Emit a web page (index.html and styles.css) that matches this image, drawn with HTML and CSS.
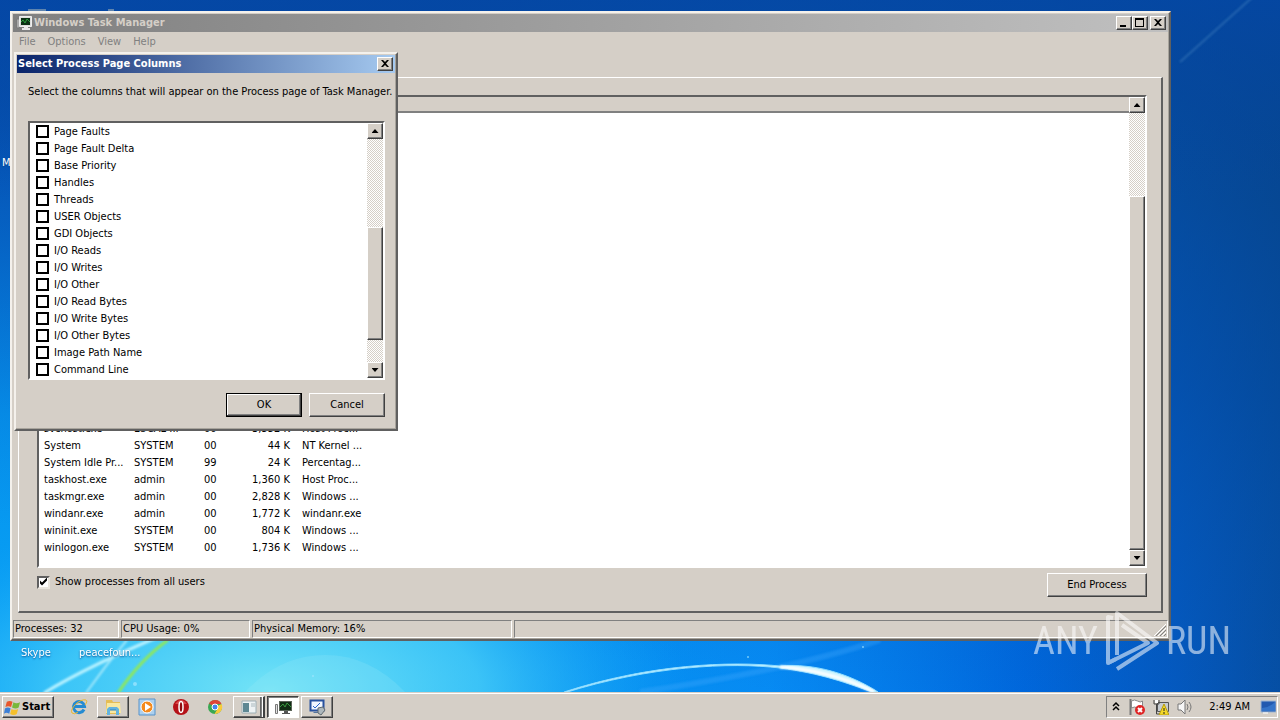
FILE: index.html
```html
<!DOCTYPE html>
<html lang="en">
  <head>
    <meta charset="UTF-8" />
    <meta name="viewport" content="width=device-width, initial-scale=1.0" />
    <title>Windows Task Manager</title>
    <link rel="stylesheet" href="styles.css">
  </head>
  <body>
    <main class="desktop">
      <svg class="wallpaper" viewBox="0 0 1280 692" preserveAspectRatio="none" aria-hidden="true">
        <defs>
          <linearGradient id="sky" x1="0" y1="0" x2="0" y2="1">
            <stop offset="0" stop-color="#0848ac" />
            <stop offset="0.25" stop-color="#0763cf" />
            <stop offset="0.6" stop-color="#0693ee" />
            <stop offset="1" stop-color="#08a4f6" />
          </linearGradient>
          <linearGradient id="shade" x1="0" y1="0" x2="1" y2="0">
            <stop offset="0.3" stop-color="#0068e0" stop-opacity="0" />
            <stop offset="0.6" stop-color="#0680f2" stop-opacity="0.7" />
            <stop offset="0.8" stop-color="#0068de" />
            <stop offset="0.92" stop-color="#0459c0" />
            <stop offset="1" stop-color="#064ea2" />
          </linearGradient>
          <linearGradient id="dusk" x1="1" y1="0" x2="0.6" y2="1">
            <stop offset="0" stop-color="#08407f" stop-opacity="0.85" />
            <stop offset="0.5" stop-color="#04489a" stop-opacity="0.5" />
            <stop offset="1" stop-color="#0458b8" stop-opacity="0" />
          </linearGradient>
          <linearGradient id="horizon" x1="0" y1="0" x2="0" y2="1">
            <stop offset="0" stop-color="#0448a8" stop-opacity="0.8" />
            <stop offset="1" stop-color="#0448a8" stop-opacity="0" />
          </linearGradient>
          <radialGradient id="glow">
            <stop offset="0" stop-color="#74e4f6" />
            <stop offset="0.5" stop-color="#48cdf8" stop-opacity="0.8" />
            <stop offset="1" stop-color="#10a0f8" stop-opacity="0" />
          </radialGradient>
          <filter id="soft"><feGaussianBlur stdDeviation="1" /></filter>
        </defs>
        <rect width="1280" height="692" fill="url(#sky)" />
        <rect width="1280" height="692" fill="url(#shade)" />
        <rect width="1280" height="692" fill="url(#dusk)" />
        <rect width="1280" height="200" fill="url(#horizon)" />
        <ellipse cx="270" cy="690" rx="420" ry="190" fill="url(#glow)" />
        <path d="M245 692Q280 655 325 655T405 692z" fill="#a0ecfa" opacity="0.2" />
        <g fill="none" filter="url(#soft)">
          <path d="M44 693Q90 665 170 632" stroke="#b8f2ff" stroke-width="3" />
          <path d="M86 693Q105 666 127 640" stroke="#a0e8fb" stroke-width="2" />
          <path d="M118 693Q140 660 168 640" stroke="#8ee85c" stroke-width="3" />
          <path d="M640 692Q790 670 880 640" stroke="#45adff" stroke-width="6" opacity="0.3" />
          <path d="M1180 62L1256 -6" stroke="#5390c8" stroke-width="2" opacity="0.4" />
        </g>
        <path d="M564 693C650 666 730 662 780 668C820 673 850 684 872 692L878 692C850 674 815 663 780 666C730 661 650 664 564 692z" fill="#c8f3ff" stroke="#8edcff" stroke-width="1" />
        <path d="M780 667Q830 670 874 692" fill="none" stroke="#fff" stroke-width="3" filter="url(#soft)" />
        <path d="M28 10h18M108 10h6" stroke="#b7bfb8" stroke-width="2" opacity="0.5" />
        <g fill="#a5e7ff" opacity="0.7">
          <circle cx="135" cy="684" r="2" />
          <circle cx="313" cy="676" r="1" />
          <circle cx="748" cy="657" r="1" />
          <circle cx="863" cy="647" r="1" />
        </g>
      </svg>

      <span class="shortcut shortcut-edge">M</span>
      <span class="shortcut shortcut-skype">Skype</span>
      <span class="shortcut shortcut-peace">peacefoun...</span>

      <section class="window task-manager">
        <header class="title-bar inactive">
          <svg class="title-icon" viewBox="0 0 16 16" aria-hidden="true">
            <path d="M1 4h2v9H1z" fill="#ddd" stroke="#777" />
            <path d="M3.500 1.500h12v10h-12z" fill="#ddd" stroke="#eee" />
            <path d="M5 3h9v7H5z" fill="#0b3014" />
            <path d="M5 7l2-2 2 3 2-4 3 3" fill="none" stroke="#2d9d3d" />
            <path d="M8 12h4v1h2v2H6v-2h2z" fill="#e8e8e8" />
          </svg>
          <h1>Windows Task Manager</h1>
          <div class="title-buttons">
            <button class="title-button" aria-label="Minimize">
              <svg viewBox="0 0 12 10"><path d="M2 7h6v2H2z" /></svg>
            </button>
            <button class="title-button" aria-label="Maximize">
              <svg viewBox="0 0 12 10"><path d="M1 0h9v9H1zM2 2v6h7V2z" fill-rule="evenodd" /></svg>
            </button>
            <button class="title-button title-close" aria-label="Close">
              <svg viewBox="0 0 12 10"><path d="M2 1h2l2 2 2-2h2L7 4.500 10 8H8L6 6 4 8H2l3-3.500z" /></svg>
            </button>
          </div>
        </header>
        <nav class="menu">
          <button>File</button>
          <button>Options</button>
          <button>View</button>
          <button>Help</button>
        </nav>

        <div class="tab-page">
          <div class="sunken process-list">
            <div class="process-view">
              <div class="process-header"></div>
              <div class="process-rows">
                <table>
                  <colgroup>
                    <col class="col-name"><col class="col-user"><col class="col-cpu"><col class="col-memory"><col>
                  </colgroup>
                  <tr><td>svchost.exe</td><td>LOCAL ...</td><td>00</td><td>3,552 K</td><td>Host Proc...</td></tr>
                  <tr><td>System</td><td>SYSTEM</td><td>00</td><td>44 K</td><td>NT Kernel ...</td></tr>
                  <tr><td>System Idle Pr...</td><td>SYSTEM</td><td>99</td><td>24 K</td><td>Percentag...</td></tr>
                  <tr><td>taskhost.exe</td><td>admin</td><td>00</td><td>1,360 K</td><td>Host Proc...</td></tr>
                  <tr><td>taskmgr.exe</td><td>admin</td><td>00</td><td>2,828 K</td><td>Windows ...</td></tr>
                  <tr><td>windanr.exe</td><td>admin</td><td>00</td><td>1,772 K</td><td>windanr.exe</td></tr>
                  <tr><td>wininit.exe</td><td>SYSTEM</td><td>00</td><td>804 K</td><td>Windows ...</td></tr>
                  <tr><td>winlogon.exe</td><td>SYSTEM</td><td>00</td><td>1,736 K</td><td>Windows ...</td></tr>
                </table>
              </div>
            </div>
            <div class="scrollbar process-scroll">
              <button class="scroll-button up" aria-label="Scroll up"></button>
              <div class="scroll-track"><div class="scroll-thumb"></div></div>
              <button class="scroll-button down" aria-label="Scroll down"></button>
            </div>
          </div>
          <div class="tab-footer">
            <label class="all-users"><input type="checkbox" checked>Show processes from all users</label>
            <button class="button end-process">End Process</button>
          </div>
        </div>

        <footer class="status-bar">
          <span class="status-processes">Processes: 32</span>
          <span class="status-cpu">CPU Usage: 0%</span>
          <span class="status-memory">Physical Memory: 16%</span>
          <span class="status-rest">
            <svg class="grip" viewBox="0 0 12 12" aria-hidden="true">
              <path d="M0 12L12 0M4 12l8-8M8 12l4-4" stroke="#fff" />
              <path d="M2 12L12 2M6 12l6-6M10 12l2-2" stroke="#808080" stroke-width="1" />
            </svg>
          </span>
        </footer>
      </section>

      <section class="window dialog" role="dialog" aria-labelledby="dialog-title">
        <header class="title-bar">
          <h2 id="dialog-title">Select Process Page Columns</h2>
          <div class="title-buttons">
            <button class="title-button" aria-label="Close">
              <svg viewBox="0 0 12 10"><path d="M2 1h2l2 2 2-2h2L7 4.500 10 8H8L6 6 4 8H2l3-3.500z" /></svg>
            </button>
          </div>
        </header>
        <form class="dialog-body">
          <p>Select the columns that will appear on the Process page of Task Manager.</p>
          <div class="sunken column-list">
            <div class="column-options">
              <label><input type="checkbox">Page Faults</label>
              <label><input type="checkbox">Page Fault Delta</label>
              <label><input type="checkbox">Base Priority</label>
              <label><input type="checkbox">Handles</label>
              <label><input type="checkbox">Threads</label>
              <label><input type="checkbox">USER Objects</label>
              <label><input type="checkbox">GDI Objects</label>
              <label><input type="checkbox">I/O Reads</label>
              <label><input type="checkbox">I/O Writes</label>
              <label><input type="checkbox">I/O Other</label>
              <label><input type="checkbox">I/O Read Bytes</label>
              <label><input type="checkbox">I/O Write Bytes</label>
              <label><input type="checkbox">I/O Other Bytes</label>
              <label><input type="checkbox">Image Path Name</label>
              <label><input type="checkbox">Command Line</label>
            </div>
            <div class="scrollbar column-scroll">
              <button type="button" class="scroll-button up" aria-label="Scroll up"></button>
              <div class="scroll-track"><div class="scroll-thumb"></div></div>
              <button type="button" class="scroll-button down" aria-label="Scroll down"></button>
            </div>
          </div>
          <div class="dialog-buttons">
            <button type="button" class="button default">OK</button>
            <button type="button" class="button">Cancel</button>
          </div>
        </form>
      </section>

      <div class="watermark">
        <span>ANY</span>
        <svg viewBox="0 0 56 64" aria-hidden="true">
          <g fill="none" stroke="currentColor" stroke-width="4" stroke-linejoin="round">
            <path d="M13 46V4L53 34 13 60" />
            <path d="M9 9L4 8V54L44 34 18 16" />
            <path d="M4 54L12 50" />
          </g>
        </svg>
        <span>RUN</span>
      </div>
    </main>

    <footer class="taskbar">
      <button class="start">
        <svg viewBox="0 0 18 18" aria-hidden="true">
          <path d="M3 3q3-2 6 0L7.500 8.500q-3-1.500-6 0z" fill="#e8562a" />
          <path d="M10 3.500q3 2 7 0L15.500 9q-3 2-7 0z" fill="#78b83a" />
          <path d="M1 10q3-2 6 0L5.500 15.500q-3-2-5.500 0z" fill="#3c7fd6" />
          <path d="M8 10.500q3 2 7 0L13.500 16q-3 2-7 0z" fill="#f5c02c" />
        </svg>
        Start
      </button>
      <div class="tasks">
        <button class="task" aria-label="Internet Explorer">
          <svg viewBox="0 0 18 18">
            <path d="M14 11.500A5.500 5.500 0 1 1 14.500 8.500H5" fill="none" stroke="#258bd2" stroke-width="3" />
            <path d="M2 15C-1 11 10 0 16 2q2 1-1 5M2 15q2 2 6-1" fill="none" stroke="#e9b82e" stroke-width="1" />
          </svg>
        </button>
        <button class="task raised" aria-label="Explorer">
          <svg viewBox="0 0 18 18">
            <path d="M2 2h6l1 2h7v12H2z" fill="#e5bd55" />
            <path d="M3 5h13l1 10H2z" fill="#f8e8a0" />
            <path d="M3 17v-6l2-2h8l2 2v6h-3v-5H6v5z" fill="#63b3df" />
            <path d="M6 12h6" stroke="#2e80b8" />
          </svg>
        </button>
        <button class="task" aria-label="Media Player">
          <svg viewBox="0 0 18 18">
            <path d="M1 1h16v16H1z" fill="#acd0ee" stroke="#5793cb" />
            <circle cx="9" cy="9" r="6" fill="#f48a1c" stroke="#fff" />
            <path d="M7 5l6 4-6 4z" fill="#fff" />
          </svg>
        </button>
        <button class="task" aria-label="Opera">
          <svg viewBox="0 0 18 18">
            <circle cx="9" cy="9" r="8" fill="#b51218" />
            <path d="M3 6q6-8 12 0z" fill="#d8474a" />
            <ellipse cx="9" cy="9" rx="2" ry="5.500" fill="#8f0c10" stroke="#fff" stroke-width="1.500" />
          </svg>
        </button>
        <button class="task" aria-label="Chrome">
          <svg viewBox="0 0 18 18">
            <circle cx="9" cy="9" r="7" fill="#39a852" />
            <path d="M9 9L3 5.500A7 7 0 0 1 15.500 6H9z" fill="#de4335" />
            <path d="M9 9L15.500 6A7 7 0 0 1 8.500 16l3.500-6z" fill="#f9cb3a" />
            <circle cx="9" cy="9" r="3" fill="#4384ee" stroke="#fff" />
          </svg>
        </button>
        <button class="task raised stacked" aria-label="Window group">
          <svg viewBox="0 0 18 18">
            <path d="M2 3h14v12H2z" fill="#eef3f4" stroke="#9daeb4" />
            <path d="M3 5h6v9H3z" fill="#5d8793" />
            <path d="M11 6h4M11 8h4" stroke="#a9b8bd" />
          </svg>
        </button>
        <button class="task pressed" aria-label="Windows Task Manager">
          <svg viewBox="0 0 18 18">
            <path d="M1.500 6.500h2v9h-2z" fill="#e2e2e2" stroke="#777" />
            <path d="M5 3h13v10H5z" fill="#596357" />
            <path d="M6 4h11v8H6z" fill="#102c13" />
            <path d="M6 9l3-3 2 3 2-4 4 4" fill="none" stroke="#36973d" />
            <path d="M10 13h4v2h2v1H8v-1h2z" fill="#555" />
          </svg>
        </button>
        <button class="task raised" aria-label="Display settings">
          <svg viewBox="0 0 18 18">
            <path d="M2.500 2.500h13v10h-13z" fill="#f2f7ff" stroke="#28529f" stroke-width="2" />
            <path d="M5 8l2 2 5-5" fill="none" stroke="#2864cc" stroke-width="1" />
            <path d="M6 14h5v1H5z" fill="#54749c" />
            <path d="M10 10l5-1 2 3-4 5-3-2z" fill="#aeb8bd" stroke="#606b72" />
          </svg>
        </button>
      </div>
      <div class="tray">
        <button class="tray-button chevron" aria-label="Show hidden icons">
          <svg viewBox="0 0 10 16"><path d="M2 7l3-3 3 3M2 11l3-3 3 3" fill="none" stroke="#000" stroke-width="1.500" /></svg>
        </button>
        <button class="tray-button" aria-label="Action Center">
          <svg viewBox="0 0 16 16">
            <path d="M1.500 0v16" stroke="#777" stroke-width="2" />
            <path d="M2.500 2q3-2 6 0t5 0v7q-2 2-5 0t-6 0z" fill="#fff" stroke="#888" />
            <circle cx="11" cy="11" r="5" fill="#df2525" />
            <path d="M9 9l4 4M13 9l-4 4" stroke="#fff" stroke-width="2" />
          </svg>
        </button>
        <button class="tray-button" aria-label="Network">
          <svg viewBox="0 0 16 16">
            <path d="M4.500 3.500h11v9h-11z" fill="#c6cbd0" stroke="#555" />
            <path d="M1 1v4h5V1M3.500 5v10H7" fill="none" stroke="#444" stroke-width="1" />
            <path d="M2 1h3v3H2z" fill="#fff" />
            <path d="M11 5l5 11H6z" fill="#f5d929" stroke="#b59a0b" />
            <path d="M11 9v3M11 13v2" stroke="#222" />
          </svg>
        </button>
        <button class="tray-button speaker" aria-label="Volume">
          <svg viewBox="0 0 16 16">
            <path d="M1 5h3l4-4v14l-4-4H1z" fill="#f6f6f6" stroke="#777" />
            <path d="M10 5q2 3 0 6M12 3q4 5 0 10" fill="none" stroke="#777" />
          </svg>
        </button>
        <time>2:49 AM</time>
        <button class="tray-button" aria-label="Show desktop">
          <svg viewBox="0 0 16 16">
            <path d="M1 2h15v11H1z" fill="#225ab0" stroke="#9fb7d4" />
            <path d="M2 9q7 0 13-6v9H2z" fill="#3474c9" />
            <path d="M3 14h5" stroke="#fff" />
          </svg>
        </button>
      </div>
    </footer>
  </body>
</html>
```
FILE: styles.css
```css
* {
  box-sizing: border-box;
}
body {
  margin: 0;
  height: 100vh;
  display: flex;
  flex-direction: column;
  overflow: hidden;
  font-family: Tahoma, "DejaVu Sans Condensed", "DejaVu Sans", sans-serif;
  font-size: 11px;
  line-height: 14px;
  color: #000;
}
button {
  font: inherit;
  color: inherit;
  padding: 0;
  border: 0;
  background: none;
}
svg {
  display: block;
}
.desktop {
  position: relative;
  flex: 1;
  min-height: 0;
}
.wallpaper {
  width: 100%;
  height: 100%;
}

/* desktop icons */
.shortcut {
  position: absolute;
  color: #fff;
  text-shadow: 0 1px 2px #05478c;
}
.shortcut-edge {
  left: 2px;
  top: 156px;
}
.shortcut-skype {
  left: 21px;
  bottom: 32px;
}
.shortcut-peace {
  left: 79px;
  bottom: 32px;
}

/* windows */
.window {
  position: absolute;
  display: flex;
  flex-direction: column;
  padding: 1px;
  background: #d5cfc7;
  border: 2px solid;
  border-color: #f4f1ec #606060 #606060 #f4f1ec;
  box-shadow: inset -1px -1px #a8a49c;
}
.task-manager {
  left: 10px;
  top: 11px;
  right: 109px;
  bottom: 51px;
}
.dialog {
  left: 14px;
  top: 52px;
  width: 384px;
}
.title-bar {
  display: flex;
  align-items: center;
  height: 18px;
  padding: 0 2px 0 1px;
  color: #fff;
  background: linear-gradient(to right, #0a246a, #a6caf0);
}
.title-bar h1,
.title-bar h2 {
  flex: 1;
  margin: 0;
  font-size: 11px;
}
.title-bar.inactive {
  color: #d5cfc7;
  background: linear-gradient(to right, #808080, #c0c0c0);
}
.title-icon {
  width: 16px;
  height: 16px;
  margin: 0 2px;
}
.title-buttons {
  display: flex;
}
.title-button {
  width: 16px;
  height: 14px;
  padding: 1px;
}
.title-button svg {
  width: 12px;
  height: 10px;
}
.title-close {
  margin-left: 2px;
}
.title-button,
.button,
.scroll-button,
.scroll-thumb,
.start,
.task.raised {
  background: #d5cfc7;
  border: 1px solid;
  border-color: #fff #404040 #404040 #fff;
  box-shadow: inset -1px -1px #808080;
}
.menu {
  display: flex;
  gap: 12px;
  height: 20px;
  padding-left: 6px;
  margin-bottom: 25px;
  color: #808080;
}
.sunken {
  display: flex;
  background: #fff;
  border: 2px solid;
  border-color: #606060 #fff #fff #606060;
}
.button {
  width: 76px;
  height: 24px;
}
.button.default {
  border-color: #000;
  box-shadow: inset -1px -1px #404040, inset 1px 1px #fff, inset -2px -2px #808080;
}

/* check boxes */
input[type="checkbox"] {
  appearance: none;
  width: 13px;
  height: 13px;
  margin: 0;
  background: #fff;
}
.all-users input {
  border: 2px solid;
  border-color: #606060 #e8e4dc #e8e4dc #606060;
}
.all-users input:checked::after {
  content: "";
  display: block;
  width: 9px;
  height: 9px;
  background: #000;
  clip-path: polygon(1px 3px, 3px 5px, 8px 0, 8px 3px, 3px 8px, 1px 6px);
}

/* scroll bars */
.scrollbar {
  display: flex;
  flex-direction: column;
  width: 16px;
}
.scroll-button {
  height: 16px;
  display: flex;
  align-items: center;
  justify-content: center;
}
.scroll-button::before {
  content: "";
  width: 7px;
  height: 4px;
  background: #000;
}
.up::before {
  clip-path: polygon(50% 0, 100% 100%, 0 100%);
}
.down::before {
  clip-path: polygon(0 0, 100% 0, 50% 100%);
}
.scroll-track {
  flex: 1;
  display: flex;
  flex-direction: column;
  justify-content: flex-end;
  background: conic-gradient(#fff 25%, #d5cfc7 0 50%, #fff 0 75%, #d5cfc7 0) 0 0 / 2px 2px;
}
.process-scroll .scroll-thumb {
  height: 81%;
}
.column-scroll .scroll-track {
  padding-bottom: 22px;
}
.column-scroll .scroll-thumb {
  height: 56%;
}

/* processes tab */
.tab-page {
  flex: 1;
  min-height: 0;
  display: flex;
  flex-direction: column;
  margin: 0 5px;
  padding: 17px 14px 14px 18px;
  border: 1px solid #fff;
  border-right: 2px solid #606060;
  border-bottom: 2px solid #606060;
}
.process-list {
  flex: 1;
  min-height: 0;
}
.process-view {
  flex: 1;
  display: flex;
  flex-direction: column;
}
.process-header {
  height: 16px;
  background: #d5cfc7;
  border-bottom: 2px solid #808080;
}
.process-rows {
  flex: 1;
  min-height: 0;
  display: flex;
  flex-direction: column;
  justify-content: flex-end;
  padding-bottom: 10px;
  overflow: hidden;
}
.process-rows table {
  width: 330px;
  table-layout: fixed;
  border-collapse: collapse;
}
.process-rows td {
  height: 17px;
  padding: 0 0 0 5px;
  white-space: nowrap;
}
.process-rows td:nth-child(4) {
  text-align: right;
  padding-right: 7px;
}
.col-name {
  width: 90px;
}
.col-user {
  width: 70px;
}
.col-cpu {
  width: 38px;
}
.col-memory {
  width: 60px;
}
.tab-footer {
  display: flex;
  justify-content: space-between;
  padding-top: 5px;
}
.all-users {
  display: flex;
  align-items: center;
  gap: 5px;
  height: 18px;
}
.end-process {
  width: 100px;
}

/* status bar */
.status-bar {
  display: flex;
  gap: 2px;
  height: 18px;
  margin-top: 7px;
}
.status-bar span {
  padding: 1px;
  border: 1px solid;
  border-color: #808080 #fff #fff #808080;
}
.status-processes {
  width: 106px;
}
.status-cpu {
  width: 129px;
}
.status-memory {
  width: 260px;
}
.status-rest {
  flex: 1;
  display: flex;
  justify-content: flex-end;
  align-items: flex-end;
}
.grip {
  width: 12px;
  height: 12px;
}

/* column picker */
.dialog-body {
  padding: 12px 10px 11px 11px;
}
.dialog-body p {
  margin: 0 0 22px;
  white-space: nowrap;
}
.column-options {
  flex: 1;
  padding-left: 6px;
}
.column-options label {
  display: flex;
  align-items: center;
  gap: 5px;
  height: 17px;
}
.column-options input {
  border: 2px solid #000;
}
.dialog-buttons {
  display: flex;
  justify-content: flex-end;
  gap: 7px;
  margin-top: 13px;
}

.watermark {
  position: absolute;
  right: 49px;
  bottom: 19px;
  display: flex;
  align-items: center;
  gap: 6px;
  color: #fff;
  opacity: 0.55;
  font-family: "Roboto Condensed", "Open Sans Condensed", "Liberation Sans Narrow", "Liberation Sans", sans-serif;
  font-size: 38px;
  font-weight: 400;
  line-height: 64px;
}
.watermark svg {
  width: 56px;
  height: 64px;
}

/* taskbar */
.taskbar {
  display: flex;
  align-items: center;
  height: 28px;
  padding: 1px 2px 0;
  background: #d5cfc7;
  border-top: 1px solid #d5cfc7;
  box-shadow: inset 0 1px #fff;
}
.start {
  display: flex;
  align-items: center;
  gap: 1px;
  width: 52px;
  height: 22px;
  padding-left: 1px;
  font-weight: bold;
}
.start svg {
  width: 17px;
  height: 17px;
}
.tasks {
  flex: 1;
  display: flex;
  gap: 2px;
  margin-left: 9px;
}
.task {
  display: flex;
  align-items: center;
  justify-content: center;
  width: 32px;
  height: 22px;
}
.task svg {
  width: 18px;
  height: 18px;
}
.task.stacked {
  border-right: 2px solid #404040;
  box-shadow: inset -1px 0 #fff, inset -2px 0 #808080, inset -3px -1px #606060;
}
.task.pressed {
  background: #fff;
  border: 1px solid;
  border-color: #404040 #fff #fff #404040;
  box-shadow: inset 1px 1px #808080;
}
.tray {
  display: flex;
  align-items: center;
  gap: 8px;
  height: 22px;
  padding: 0 1px 0 4px;
  border: 1px solid;
  border-color: #808080 #fff #fff #808080;
}
.tray-button svg {
  width: 16px;
  height: 16px;
}
.chevron svg {
  width: 10px;
}
.speaker {
  margin-right: 8px;
}
.tray time {
  margin-right: 2px;
}
```
